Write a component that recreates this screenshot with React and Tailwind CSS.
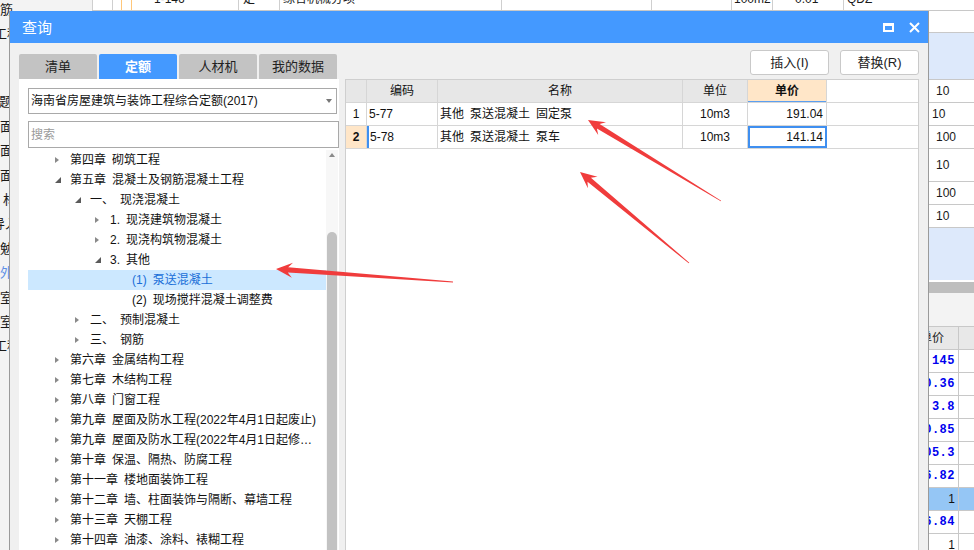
import React from "react"

const cjk = "font-['Liberation_Sans','Noto_Sans_CJK_SC',sans-serif]"

const tree = [
  { level: 0, label: "第四章\u2002砌筑工程", state: "closed" },
  { level: 0, label: "第五章\u2002混凝土及钢筋混凝土工程", state: "open" },
  { level: 1, label: "一、\u2002现浇混凝土", state: "open" },
  { level: 2, label: "1.\u2002现浇建筑物混凝土", state: "closed" },
  { level: 2, label: "2.\u2002现浇构筑物混凝土", state: "closed" },
  { level: 2, label: "3.\u2002其他", state: "open" },
  { level: 3, label: "(1)\u2002泵送混凝土", selected: true },
  { level: 3, label: "(2)\u2002现场搅拌混凝土调整费" },
  { level: 1, label: "二、\u2002预制混凝土", state: "closed" },
  { level: 1, label: "三、\u2002钢筋", state: "closed" },
  { level: 0, label: "第六章\u2002金属结构工程", state: "closed" },
  { level: 0, label: "第七章\u2002木结构工程", state: "closed" },
  { level: 0, label: "第八章\u2002门窗工程", state: "closed" },
  { level: 0, label: "第九章\u2002屋面及防水工程(2022年4月1日起废止)", state: "closed" },
  { level: 0, label: "第九章\u2002屋面及防水工程(2022年4月1日起修…", state: "closed" },
  { level: 0, label: "第十章\u2002保温、隔热、防腐工程", state: "closed" },
  { level: 0, label: "第十一章\u2002楼地面装饰工程", state: "closed" },
  { level: 0, label: "第十二章\u2002墙、柱面装饰与隔断、幕墙工程", state: "closed" },
  { level: 0, label: "第十三章\u2002天棚工程", state: "closed" },
  { level: 0, label: "第十四章\u2002油漆、涂料、裱糊工程", state: "closed" },
]

const indent = ["pl-[27px]", "pl-[47px]", "pl-[67px]", "pl-[104px]"]

function Caret({ state }) {
  if (state === "closed") {
    return <span className="w-0 h-0 border-y-[3.5px] border-y-transparent border-l-[4px] border-l-[#8a8a8a]" />
  }
  if (state === "open") {
    return (
      <svg width="6" height="6" viewBox="0 0 6 6">
        <polygon points="6,0 6,6 0,6" fill="#5a5a5a" />
      </svg>
    )
  }
  return null
}

function arrow(tx, ty, px, py) {
  const len = Math.hypot(px - tx, py - ty)
  const dx = (px - tx) / len
  const dy = (py - ty) / len
  const nx = -dy
  const ny = dx
  const at = (s, w) => `${(px - dx * s + nx * w).toFixed(1)},${(py - dy * s + ny * w).toFixed(1)}`
  return [at(len, 0.4), at(12, 2.6), at(16.5, 7.5), at(0, 0), at(16.5, -7.5), at(12, -2.6), at(len, -0.4)].join(" ")
}

function LeftStrip() {
  const rows = [
    { t: "筋", ml: "ml-0" },
    { t: "工程", ml: "-ml-[6px]" },
  ]
  const rows2 = [
    { t: "题", ml: "-ml-[1px]" },
    { t: "面", ml: "ml-0" },
    { t: "面", ml: "ml-0" },
    { t: "面", ml: "ml-0" },
    { t: "材料", ml: "ml-[3px]" },
    { t: "导入", ml: "-ml-[8px]" },
    { t: "勉", ml: "ml-0" },
    { t: "外", ml: "ml-0", c: "text-[#5d8fe6]" },
    { t: "室", ml: "ml-0" },
    { t: "室", ml: "ml-0" },
    { t: "工程", ml: "-ml-[6px]" },
  ]
  return (
    <div className="w-[92px] shrink-0 bg-[#f3f3f3] text-[13px] overflow-hidden">
      <div className="-mt-[2px]">
        {rows.map((r, i) => (
          <div key={i} className={`h-6 flex items-center whitespace-nowrap ${r.ml}`}>{r.t}</div>
        ))}
        <div className="h-[44px]" />
        {rows2.map((r, i) => (
          <div key={i} className={`h-[24.4px] flex items-center whitespace-nowrap ${r.ml} ${r.c || ""}`}>{r.t}</div>
        ))}
      </div>
    </div>
  )
}

function TopRow() {
  return (
    <div className="h-[11px] shrink-0 border-b border-[#c8c8c8] overflow-hidden bg-white">
      <div className="-mt-[12px] h-[22px] flex text-[12px] whitespace-nowrap">
        <div className="w-[21px] border-x border-[#cfcfcf]" />
        <div className="w-[9px] border-r border-[#ffc77a]" />
        <div className="w-[10px] border-r border-[#ffc77a]" />
        <div className="w-[107px] border-r border-[#cfcfcf] flex items-center pl-[22px]">1-146</div>
        <div className="w-[41px] border-r border-[#cfcfcf] flex items-center pl-[4px]">定</div>
        <div className="w-[222px] border-r border-[#cfcfcf] flex items-center pl-[3px]">综合机械分项</div>
        <div className="w-[150px] border-r border-[#cfcfcf]" />
        <div className="w-[80px] border-r border-[#cfcfcf]" />
        <div className="w-[41px] border-r border-[#cfcfcf] flex items-center pl-[2px]">100m2</div>
        <div className="w-[71px] border-r border-[#cfcfcf] flex items-center pl-[22px]">0.01</div>
        <div className="flex-1 flex items-center pl-[3px]">QDZ</div>
      </div>
    </div>
  )
}

function RightStrip() {
  const upper = [
    { t: "10", h: "h-[23px]", pl: "pl-[7px]" },
    { t: "10", h: "h-[23px]", pl: "pl-[3px]" },
    { t: "100", h: "h-[23px]", pl: "pl-[7px]" },
    { t: "10", h: "h-[33px]", pl: "pl-[7px]" },
    { t: "100", h: "h-[23px]", pl: "pl-[7px]" },
    { t: "10", h: "h-[23px]", pl: "pl-[7px]" },
  ]
  const prices = [
    { t: "145" },
    { t: "10.36" },
    { t: "3.8" },
    { t: "10.85" },
    { t: "105.3" },
    { t: "16.82" },
    { t: "1", hl: true, plain: true },
    { t: "16.84" },
    { t: "1", plain: true },
  ]
  return (
    <div className="w-[45px] shrink-0 flex flex-col text-[12px] overflow-hidden [&>*]:shrink-0">
      <div className="h-[22px] bg-white border-b border-[#c8c8c8]" />
      <div className="h-[47px] bg-[#dde9fb] border-b border-[#c8c8c8]" />
      {upper.map((r, i) => (
        <div key={i} className={`${r.h} ${r.pl} bg-white border-b border-[#c8c8c8] flex items-center`}>{r.t}</div>
      ))}
      <div className="h-[52px] bg-[#dde9fb]" />
      <div className="h-[2px] bg-white" />
      <div className="h-[11px] bg-[#bebebe]" />
      <div className="h-[34px] bg-[#f3f3f3] border-b border-[#c8c8c8]" />
      <div className="h-[23px] flex bg-[#e8e8e8] border-b border-[#c8c8c8]">
        <div className="w-[30px] border-r border-[#c8c8c8] overflow-hidden flex justify-end items-center pr-[14px] whitespace-nowrap">单价</div>
        <div className="flex-1" />
      </div>
      {prices.map((p, i) => (
        <div key={i} className={`h-[23px] flex border-b border-[#c8c8c8] ${p.hl ? "bg-[#95c6f5]" : "bg-white"}`}>
          <div
            className={`w-[30px] border-r border-[#c8c8c8] overflow-hidden flex justify-end items-center pr-[3px] whitespace-nowrap ${
              p.plain ? "text-[#111]" : "text-[#0000ee] font-bold font-['Liberation_Mono',monospace] tracking-[0.5px]"
            }`}
          >
            {p.t}
          </div>
          <div className="flex-1" />
        </div>
      ))}
    </div>
  )
}

function Dialog() {
  return (
    <div className="absolute left-[9px] top-[11px] w-[920px] h-[560px] border-x border-[#9a9a9a] bg-[#f0f0f0] flex flex-col">
      {/* title */}
      <div className="h-[32px] shrink-0 bg-[#4499ff] flex items-center pl-[12px] pr-[8px]">
        <span className="text-white text-[15px] leading-none">查询</span>
        <div className="ml-auto flex items-center gap-[15px]">
          <div className="w-[11px] h-[9px] border-2 border-t-[3px] border-white" />
          <svg width="11" height="11" viewBox="0 0 11 11">
            <path d="M1 1 L10 10 M10 1 L1 10" stroke="white" strokeWidth="2" />
          </svg>
        </div>
      </div>

      <div className="flex flex-1 pl-[9px] pr-[9px] gap-[6px] min-h-0">
        {/* left column */}
        <div className="w-[320px] shrink-0 pt-[11px] flex flex-col">
          <div className="h-[25px] shrink-0 flex gap-[2px] text-[13px]">
            {["清单", "定额", "人材机", "我的数据"].map((t, i) => (
              <div
                key={t}
                className={`w-[78px] rounded-t-[2px] flex items-center justify-center ${
                  i === 1 ? "bg-[#4499ff] text-white font-bold" : "bg-[#c3c3c3] text-[#222]"
                }`}
              >
                {t}
              </div>
            ))}
          </div>
          <div className="flex-1 bg-white flex flex-col">
            <div className="mt-[9px] ml-[9px] w-[309px] h-[26px] shrink-0 border border-[#a9a9a9] flex items-center pl-[2px] pr-[4px] text-[12px] text-[#111]">
              <span>海南省房屋建筑与装饰工程综合定额(2017)</span>
              <span className="ml-auto w-0 h-0 border-x-[3.5px] border-x-transparent border-t-[4px] border-t-[#777]" />
            </div>
            <div className="mt-[7px] ml-[9px] w-[311px] h-[27px] shrink-0 border border-[#a9a9a9] flex items-center pl-[2px] text-[12px] text-[#9a9a9a]">
              搜索
            </div>
            <div className="mt-[2px] ml-[9px] flex flex-1">
              <div className="w-[298px] text-[12px] text-[#111]">
                {tree.map((n, i) => (
                  <div
                    key={i}
                    className={`h-[20px] flex items-center whitespace-nowrap ${indent[n.level]} ${
                      n.selected ? "bg-[#cce8ff] text-[#1a6fd8]" : ""
                    }`}
                  >
                    {n.level < 3 && (
                      <span className="w-[15px] shrink-0 flex items-center">
                        <Caret state={n.state} />
                      </span>
                    )}
                    <span>{n.label}</span>
                  </div>
                ))}
              </div>
              <div className="w-[12px] bg-[#f7f7f7] flex flex-col items-center">
                <span className="mt-[3px] w-0 h-0 border-x-[3.5px] border-x-transparent border-b-[4px] border-b-[#8a8a8a]" />
                <div className="mt-[75px] w-[10px] flex-1 bg-[#c2c2c2] rounded-t-[5px]" />
              </div>
            </div>
          </div>
        </div>

        {/* right column */}
        <div className="flex-1 pt-[7px] flex flex-col">
          <div className="h-[25px] shrink-0 flex justify-end gap-[11px] text-[13px] text-[#222]">
            <div className="w-[79px] bg-white border border-[#c9c9c9] rounded-[3px] flex items-center justify-center">插入(I)</div>
            <div className="w-[79px] bg-white border border-[#c9c9c9] rounded-[3px] flex items-center justify-center">替换(R)</div>
          </div>
          <div className="mt-[4px] flex-1 bg-white border border-[#cfcfcf] text-[12px] text-[#111]">
            <div className="h-[23px] flex border-b border-[#d6d6d6]">
              <div className="w-[21px] bg-[#e7e7e7] border-r border-[#d6d6d6]" />
              <div className="w-[71px] bg-[#e7e7e7] border-r border-[#d6d6d6] flex items-center justify-center">编码</div>
              <div className="w-[245px] bg-[#e7e7e7] border-r border-[#d6d6d6] flex items-center justify-center">名称</div>
              <div className="w-[65px] bg-[#e7e7e7] border-r border-[#d6d6d6] flex items-center justify-center">单位</div>
              <div className="w-[79px] bg-[#ffe6c8] border-r border-[#d6d6d6] flex items-center justify-center font-bold shadow-[inset_0_-1px_0_#5b9ff0]">单价</div>
            </div>
            <div className="h-[23px] flex border-b border-[#d6d6d6]">
              <div className="w-[21px] border-r border-[#d6d6d6] flex items-center justify-center">1</div>
              <div className="w-[71px] border-r border-[#d6d6d6] flex items-center pl-[2px]">5-77</div>
              <div className="w-[245px] border-r border-[#d6d6d6] flex items-center pl-[2px]">其他&ensp;泵送混凝土&ensp;固定泵</div>
              <div className="w-[65px] border-r border-[#d6d6d6] flex items-center justify-center">10m3</div>
              <div className="w-[79px] border-r border-[#d6d6d6] flex items-center justify-end pr-[3px]">191.04</div>
            </div>
            <div className="h-[23px] flex border-b border-[#d6d6d6]">
              <div className="w-[21px] bg-[#ffe6c8] border-r border-[#d6d6d6] flex items-center justify-center font-bold">2</div>
              <div className="w-[71px] border-r border-[#d6d6d6] flex items-center pl-[3px] shadow-[inset_2px_0_0_#3f8ff0]">5-78</div>
              <div className="w-[245px] border-r border-[#d6d6d6] flex items-center pl-[2px]">其他&ensp;泵送混凝土&ensp;泵车</div>
              <div className="w-[65px] border-r border-[#d6d6d6] flex items-center justify-center">10m3</div>
              <div className="w-[79px] border-2 border-[#3f8ff0] flex items-center justify-end pr-[2px]">141.14</div>
            </div>
          </div>
        </div>
      </div>
    </div>
  )
}

export default function App() {
  return (
    <div className={`relative w-[974px] h-[550px] overflow-hidden bg-white flex text-[#1a1a1a] ${cjk}`}>
      <LeftStrip />
      <div className="flex-1 flex flex-col">
        <TopRow />
        <div className="flex-1 flex min-h-0">
          <div className="flex-1 bg-white" />
          <RightStrip />
        </div>
      </div>

      <Dialog />

      {/* annotation arrows */}
      <svg className="absolute inset-0 pointer-events-none" width="974" height="550" viewBox="0 0 974 550">
        <polygon points={arrow(721, 201, 588, 120)} fill="#f03c3c" />
        <polygon points={arrow(689, 263, 580, 172)} fill="#f03c3c" />
        <polygon points={arrow(453, 282, 276, 269)} fill="#f03c3c" />
      </svg>
    </div>
  )
}
